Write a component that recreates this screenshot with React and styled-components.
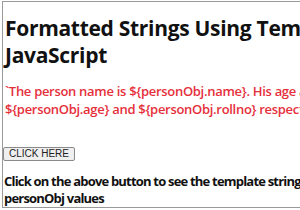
import React from 'react';
import styled, { createGlobalStyle } from 'styled-components';

const GlobalStyle = createGlobalStyle`
  html, body {
    margin: 0;
    padding: 0;
    background: #fff;
    overflow: hidden;
  }
`;

const Frame = styled.div`
  margin: 1px 0 0 2px;
  width: 420px;
  height: 205px;
  border: 1px solid #9a9a9a;
  border-right: none;
  overflow: hidden;
  font-family: "Open Sans", "Noto Sans", sans-serif;
`;

const Line = styled.span`
  display: block;
  white-space: nowrap;
`;

const Title = styled.h1`
  margin: 13px 0 0;
  padding-left: 2px;
  font-size: 21px;
  line-height: 27px;
  letter-spacing: -0.3px;
  font-weight: 700;
  color: #111;
`;

const Template = styled.p`
  margin: 13px 0 0;
  padding-left: 2px;
  font-size: 13px;
  line-height: 18px;
  letter-spacing: -0.3px;
  font-weight: 600;
  color: #e5303c;
`;

const Button = styled.button`
  display: block;
  margin: 29px 0 0;
  padding: 0 5px;
  height: 14px;
  font-family: "Liberation Sans", Arial, sans-serif;
  font-size: 10px;
  line-height: 12px;
  color: #222;
  background: #efefef;
  border: 1px solid #8a8a8a;
  border-radius: 2px;
`;

const Result = styled.p`
  margin: 12px 0 0;
  padding-left: 1px;
  font-size: 13px;
  line-height: 17px;
  letter-spacing: -0.8px;
  font-weight: 700;
  color: #111;
`;

export default function App() {
  return (
    <>
      <GlobalStyle />
      <Frame>
        <Title>
          <Line>Formatted Strings Using Template Strings in</Line>
          <Line>JavaScript</Line>
        </Title>
        <Template>
          <Line>`The person name is {'${personObj.name}'}. His age and rollno are</Line>
          <Line>{'${personObj.age}'} and {'${personObj.rollno}'} respectively`</Line>
        </Template>
        <Button>CLICK HERE</Button>
        <Result>
          <Line>Click on the above button to see the template string with</Line>
          <Line>personObj values</Line>
        </Result>
      </Frame>
    </>
  );
}
